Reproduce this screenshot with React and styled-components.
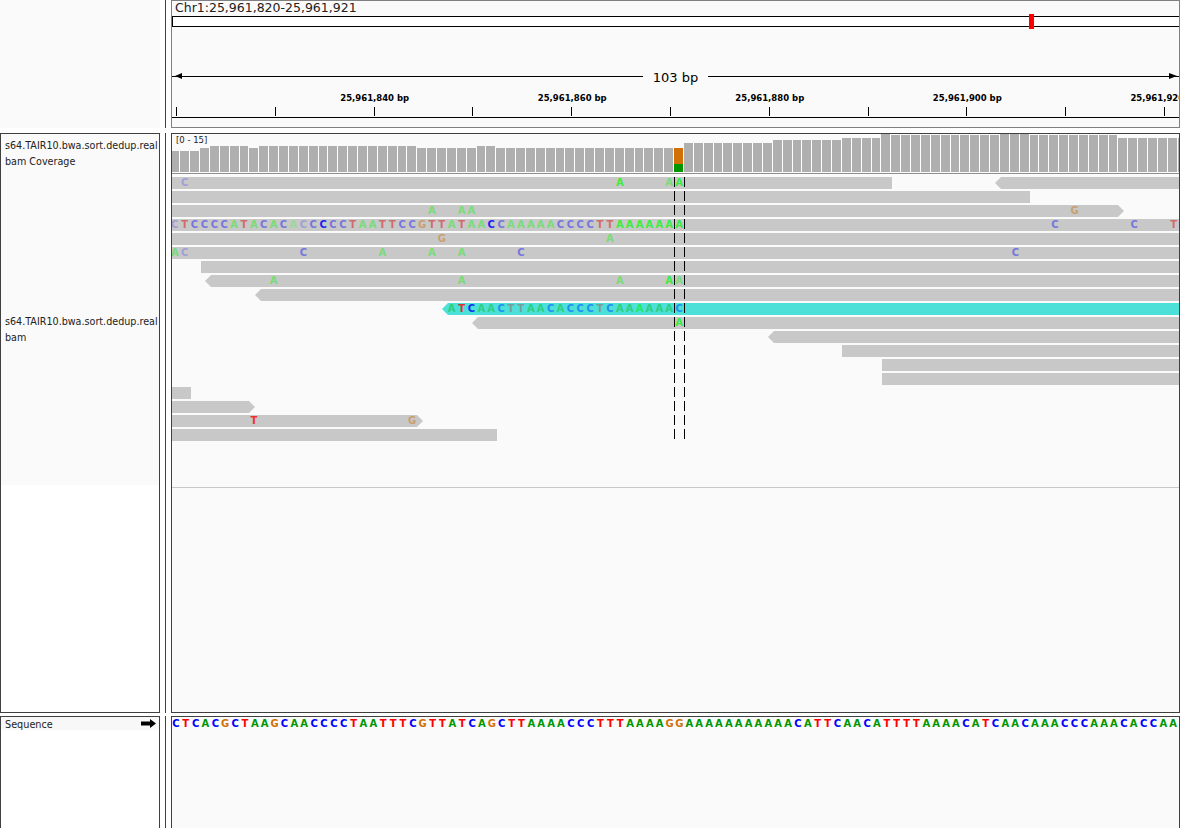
import React from 'react';
import styled, { createGlobalStyle } from 'styled-components';

const BP = 9.89;
const OFFSET = -1.6;
const FONT = '"DejaVu Sans", "Liberation Sans", sans-serif';

const REF_SEQ =
  'CTCACGCTAAGCAACCCCTAATTTCGTTATCAGCTTAAAACCCTTTAAAAGGAAAAAAAAAAACATTCAACATTTTAAAACATCAACAAACCCAAACACCAA';

const BASE_COLORS = { A: '#009600', C: '#0000ff', T: '#ff0000', G: '#d17105' };

// shade of a mismatch, by base quality
const SHADES = {
  A: { 1: '#98d898', 2: '#78dc78', 3: '#3cec3c' },
  C: { 1: '#a0a0d4', 2: '#7676dc', 3: '#2020f4' },
  T: { 1: '#d49a9a', 2: '#d06c6c', 3: '#f03030' },
  G: { 1: '#cdb08c', 2: '#c8a070', 3: '#c8a070' },
};
const CYAN_SHADES = {
  A: { 2: '#2ecf7e', 3: '#20e860' },
  C: { 2: '#2090f0', 3: '#1030f0' },
  T: { 2: '#7c9c9c', 3: '#e03030' },
  G: { 2: '#c8a070', 3: '#c8a070' },
};

// [count, height] runs of the coverage track, 0 marks the mismatch column
const COVERAGE = [
  [3, 21], [1, 24], [4, 26], [1, 24], [16, 26], [6, 24], [2, 26], [18, 24], [1, 0],
  [9, 29], [7, 32], [4, 34], [1, 38], [11, 37], [3, 38], [9, 37], [7, 34],
];
const coverageBars = COVERAGE.flatMap(([count, height]) => Array(count).fill(height));

const letters = (str, start = 0, q = 2) =>
  str.split('').map((b, i) => [start + i, b, q]);

const read3 = [
  [0, 'C', 1], [1, 'T', 2],
  ...letters('CCCCATACA', 2),
  [11, 'C', 2], [12, 'A', 1], [13, 'C', 1], [14, 'C', 2], [15, 'C', 3],
  ...letters('CCTAATTCCGTTATAA', 16),
  [32, 'C', 3],
  ...letters('CAAAAACCCCTT', 33),
  ...letters('AAAAAAA', 45, 3),
  [89, 'C', 2], [97, 'C', 2], [101, 'T', 2],
];

const read9 = [
  [28, 'A', 2], [29, 'T', 3], [30, 'C', 3],
  ...letters('AACTTAACACCCTCAA', 31),
  [47, 'A', 3],
  ...letters('AAA', 48),
  [51, 'C', 2],
];

// reads per row of the alignment track
const ROWS = [
  { reads: [{ from: 0, to: 720 }, { from: 823, to: 1008, tip: 'left' }], bases: [[1, 'C', 1], [45, 'A', 3], [50, 'A', 2], [51, 'A', 3]] },
  { reads: [{ from: 0, to: 858 }] },
  { reads: [{ from: 0, to: 952, tip: 'right' }], bases: [[26, 'A', 2], [29, 'A', 2], [30, 'A', 2], [91, 'G', 2]] },
  { reads: [{ from: 0, to: 1008 }], bases: read3 },
  { reads: [{ from: 0, to: 1008 }], bases: [[27, 'G', 2], [44, 'A', 2]] },
  { reads: [{ from: 0, to: 1008 }], bases: [[0, 'A', 2], [1, 'C', 1], [13, 'C', 2], [21, 'A', 2], [26, 'A', 2], [29, 'A', 2], [35, 'C', 2], [85, 'C', 2]] },
  { reads: [{ from: 29, to: 1008 }] },
  { reads: [{ from: 33, to: 1008, tip: 'left' }], bases: [[10, 'A', 2], [29, 'A', 2], [45, 'A', 2], [50, 'A', 3], [51, 'A', 2]] },
  { reads: [{ from: 83, to: 1008, tip: 'left' }] },
  { reads: [{ from: 270, to: 1008, tip: 'left', selected: true }], bases: read9, selected: true },
  { reads: [{ from: 300, to: 1008, tip: 'left' }], bases: [[51, 'A', 3]] },
  { reads: [{ from: 596, to: 1008, tip: 'left' }] },
  { reads: [{ from: 670, to: 1008 }] },
  { reads: [{ from: 710, to: 1008 }] },
  { reads: [{ from: 710, to: 1008 }] },
  { reads: [{ from: 0, to: 19 }] },
  { reads: [{ from: 0, to: 83, tip: 'right' }] },
  { reads: [{ from: 0, to: 251, tip: 'right' }], bases: [[8, 'T', 3], [24, 'G', 2]] },
  { reads: [{ from: 0, to: 325 }] },
];

const GlobalStyle = createGlobalStyle`
  html, body {
    margin: 0;
    padding: 0;
    background: #fff;
    overflow: hidden;
  }
`;

const Page = styled.div`
  width: 1199px;
  height: 828px;
  display: flex;
  flex-direction: column;
  font-family: ${FONT};
  color: #111;
  overflow: hidden;
`;

const PanelRow = styled.div`
  display: flex;
  height: ${(p) => p.$height}px;
  margin-bottom: ${(p) => p.$gap || 0}px;
`;

const NamePanel = styled.div`
  flex: 0 0 160px;
  box-sizing: border-box;
  display: flex;
  flex-direction: column;
  background: ${(p) => (p.$plain ? '#fafafa' : '#fff')};
  border: ${(p) => (p.$plain ? 'none' : '1px solid #404040')};
  border-bottom: ${(p) => (p.$open ? 'none' : '')};
`;

const Splitter = styled.div`
  flex: 0 0 11px;
  box-sizing: border-box;
  padding-left: 5px;

  &::before {
    content: '';
    display: block;
    width: 1px;
    height: 100%;
    background: #404040;
  }
`;

const DataPanel = styled.div`
  flex: 0 0 1009px;
  box-sizing: border-box;
  display: flex;
  flex-direction: column;
  position: relative;
  background: #fafafa;
  overflow: hidden;
  border: 1px solid ${(p) => (p.$header ? '#808080' : '#404040')};
  border-bottom: ${(p) => (p.$open ? 'none' : '')};
`;

const Locus = styled.div`
  height: 15px;
  line-height: 14px;
  padding-left: 3px;
  font-size: 12.5px;
  color: #222;
  white-space: nowrap;
`;

const Ideogram = styled.div`
  position: relative;
  box-sizing: border-box;
  height: 11px;
  background: #fff;
  border: 1px solid #000;
  border-right: none;
`;

const Marker = styled.div`
  position: absolute;
  top: -3px;
  left: 856px;
  width: 5px;
  height: 15px;
  background: #ff0000;
`;

const SpanRow = styled.div`
  display: flex;
  align-items: center;
  height: 17px;
  margin-top: 41px;
`;

const SpanLine = styled.div`
  position: relative;
  flex: 1;
  height: 1px;
  background: #000;

  &::before {
    content: '';
    position: absolute;
    top: -3px;
    ${(p) => (p.$side === 'left' ? 'left: 3px;' : 'right: 2px;')}
    border-top: 3.5px solid transparent;
    border-bottom: 3.5px solid transparent;
    ${(p) => (p.$side === 'left' ? 'border-right: 7px solid #000;' : 'border-left: 8px solid #000;')}
  }
`;

const SpanLabel = styled.div`
  padding: 1px 10px 0;
  font-size: 13px;
  line-height: 17px;
  color: #000;
`;

const Ruler = styled.div`
  display: flex;
  box-sizing: border-box;
  height: 11px;
  margin-top: 22px;
  padding-left: 4.2px;
  border-bottom: 1px solid #000;
`;

const Tick = styled.div`
  position: relative;
  flex: 0 0 98.78px;
  box-sizing: border-box;
  height: 9px;
  border-left: 1px solid #000;
`;

const TickLabel = styled.span`
  position: absolute;
  bottom: 12px;
  left: 0;
  transform: translateX(-50%);
  font-size: 8.5px;
  font-weight: 700;
  line-height: 12px;
  color: #000;
  white-space: nowrap;
`;

const TrackName = styled.div`
  box-sizing: border-box;
  height: ${(p) => p.$height}px;
  display: flex;
  align-items: ${(p) => (p.$center ? 'center' : 'flex-start')};
  padding: ${(p) => (p.$center ? '0' : '4px')} 0 0 4px;
  background: #fafafa;
  font-size: 9.6px;
  line-height: 16px;
  color: #222;
`;

const SequenceName = styled.div`
  display: flex;
  align-items: center;
  justify-content: space-between;
  height: 13px;
  padding: 0 3px 0 4px;
  background: #f8f8f8;
  font-size: 9.7px;
  color: #222;
`;

const SequenceLabel = styled.span`
  padding-top: 2px;
  line-height: 11px;
`;

const CoverageTrack = styled.div`
  position: relative;
  flex: 0 0 40px;
  box-sizing: border-box;
  border-bottom: 1px solid #909090;
`;

const Scale = styled.span`
  position: absolute;
  top: 0;
  left: 4px;
  font-size: 8.5px;
  line-height: 12px;
  color: #222;
`;

const Bars = styled.div`
  display: flex;
  align-items: flex-end;
  height: 38px;
  margin-left: ${OFFSET}px;
`;

const Bar = styled.div`
  flex: 0 0 ${BP}px;
  box-sizing: border-box;
  display: flex;
  flex-direction: column;
  background: #afafaf;
  border-right: 1px solid #fff;
`;

const BarSegment = styled.div`
  flex: 0 0 ${(p) => p.$size}px;
  background: ${(p) => p.$color};
`;

const AlignmentTrack = styled.div`
  position: relative;
  flex: 0 0 314px;
  box-sizing: border-box;
  padding-top: 3px;
  border-bottom: 1px solid #c8c8c8;
`;

const ReadRow = styled.div`
  position: relative;
  display: flex;
  height: 12px;
  margin-bottom: 2px;
`;

const tipShape = {
  left: 'polygon(6px 0, 100% 0, 100% 100%, 6px 100%, 0 50%)',
  right: 'polygon(0 0, calc(100% - 6px) 0, 100% 50%, calc(100% - 6px) 100%, 0 100%)',
};

const Read = styled.div`
  flex: none;
  height: 12px;
  background: ${(p) => (p.$selected ? '#4de0d8' : '#c8c8c8')};
  clip-path: ${(p) => tipShape[p.$tip] || 'none'};
`;

const Mismatch = styled.span`
  position: absolute;
  top: 0;
  width: ${BP}px;
  text-align: center;
  font-size: 10px;
  font-weight: 700;
  line-height: 12px;
  color: ${(p) => p.$color};
`;

const CenterLine = styled.div`
  position: absolute;
  top: 3px;
  left: ${(p) => p.$left}px;
  width: 1px;
  height: 264px;
  background: repeating-linear-gradient(to bottom, #000 0 10px, transparent 10px 14px);
`;

const SequenceTrack = styled.div`
  display: flex;
  height: 13px;
  margin-left: ${OFFSET + 0.5}px;
`;

const RefBase = styled.span`
  flex: 0 0 ${BP}px;
  text-align: center;
  font-size: 10px;
  font-weight: 700;
  line-height: 13px;
  color: ${(p) => BASE_COLORS[p.$base]};
`;

const StrandArrow = () => (
  <svg width="15" height="9" viewBox="0 0 15 9">
    <path d="M0 2.5H9V0L15 4.5L9 9V6.5H0Z" fill="#000" />
  </svg>
);

const ReadLine = ({ row }) => {
  let cursor = 0;
  const palette = row.selected ? CYAN_SHADES : SHADES;
  return (
    <ReadRow>
      {row.reads.map((r) => {
        const gap = r.from - cursor;
        cursor = r.to;
        return (
          <Read
            key={r.from}
            $tip={r.tip}
            $selected={r.selected}
            style={{ marginLeft: gap, width: r.to - r.from }}
          />
        );
      })}
      {(row.bases || []).map(([n, base, q]) => (
        <Mismatch key={n} $color={palette[base][q]} style={{ left: OFFSET - 0.6 + n * BP }}>
          {base}
        </Mismatch>
      ))}
    </ReadRow>
  );
};

const ticks = Array.from({ length: 11 }, (_, i) => i);

export default function App() {
  return (
    <>
      <GlobalStyle />
      <Page>
        <PanelRow $height={128} $gap={5}>
          <NamePanel $plain />
          <Splitter />
          <DataPanel $header>
            <Locus>Chr1:25,961,820-25,961,921</Locus>
            <Ideogram>
              <Marker />
            </Ideogram>
            <SpanRow>
              <SpanLine $side="left" />
              <SpanLabel>103 bp</SpanLabel>
              <SpanLine $side="right" />
            </SpanRow>
            <Ruler>
              {ticks.map((i) => (
                <Tick key={i}>
                  {i > 0 && i % 2 === 0 && <TickLabel>25,961,{820 + i * 10} bp</TickLabel>}
                </Tick>
              ))}
            </Ruler>
          </DataPanel>
        </PanelRow>

        <PanelRow $height={580} $gap={3}>
          <NamePanel>
            <TrackName $height={40}>
              <div>
                s64.TAIR10.bwa.sort.dedup.real
                <br />
                bam Coverage
              </div>
            </TrackName>
            <TrackName $height={311} $center>
              <div>
                s64.TAIR10.bwa.sort.dedup.real
                <br />
                bam
              </div>
            </TrackName>
          </NamePanel>
          <Splitter />
          <DataPanel>
            <CoverageTrack>
              <Bars>
                {coverageBars.map((h, i) =>
                  h === 0 ? (
                    <Bar key={i}>
                      <BarSegment $size={16} $color="#d17105" />
                      <BarSegment $size={8} $color="#009600" />
                    </Bar>
                  ) : (
                    <Bar key={i} style={{ height: h }} />
                  )
                )}
              </Bars>
              <Scale>[0 - 15]</Scale>
            </CoverageTrack>
            <AlignmentTrack>
              {ROWS.map((row, i) => (
                <ReadLine key={i} row={row} />
              ))}
              <CenterLine $left={502} />
              <CenterLine $left={512} />
            </AlignmentTrack>
          </DataPanel>
        </PanelRow>

        <PanelRow $height={112}>
          <NamePanel $open>
            <SequenceName>
              <SequenceLabel>Sequence</SequenceLabel>
              <StrandArrow />
            </SequenceName>
          </NamePanel>
          <Splitter />
          <DataPanel $open>
            <SequenceTrack>
              {REF_SEQ.split('').map((b, i) => (
                <RefBase key={i} $base={b}>
                  {b}
                </RefBase>
              ))}
            </SequenceTrack>
          </DataPanel>
        </PanelRow>
      </Page>
    </>
  );
}
